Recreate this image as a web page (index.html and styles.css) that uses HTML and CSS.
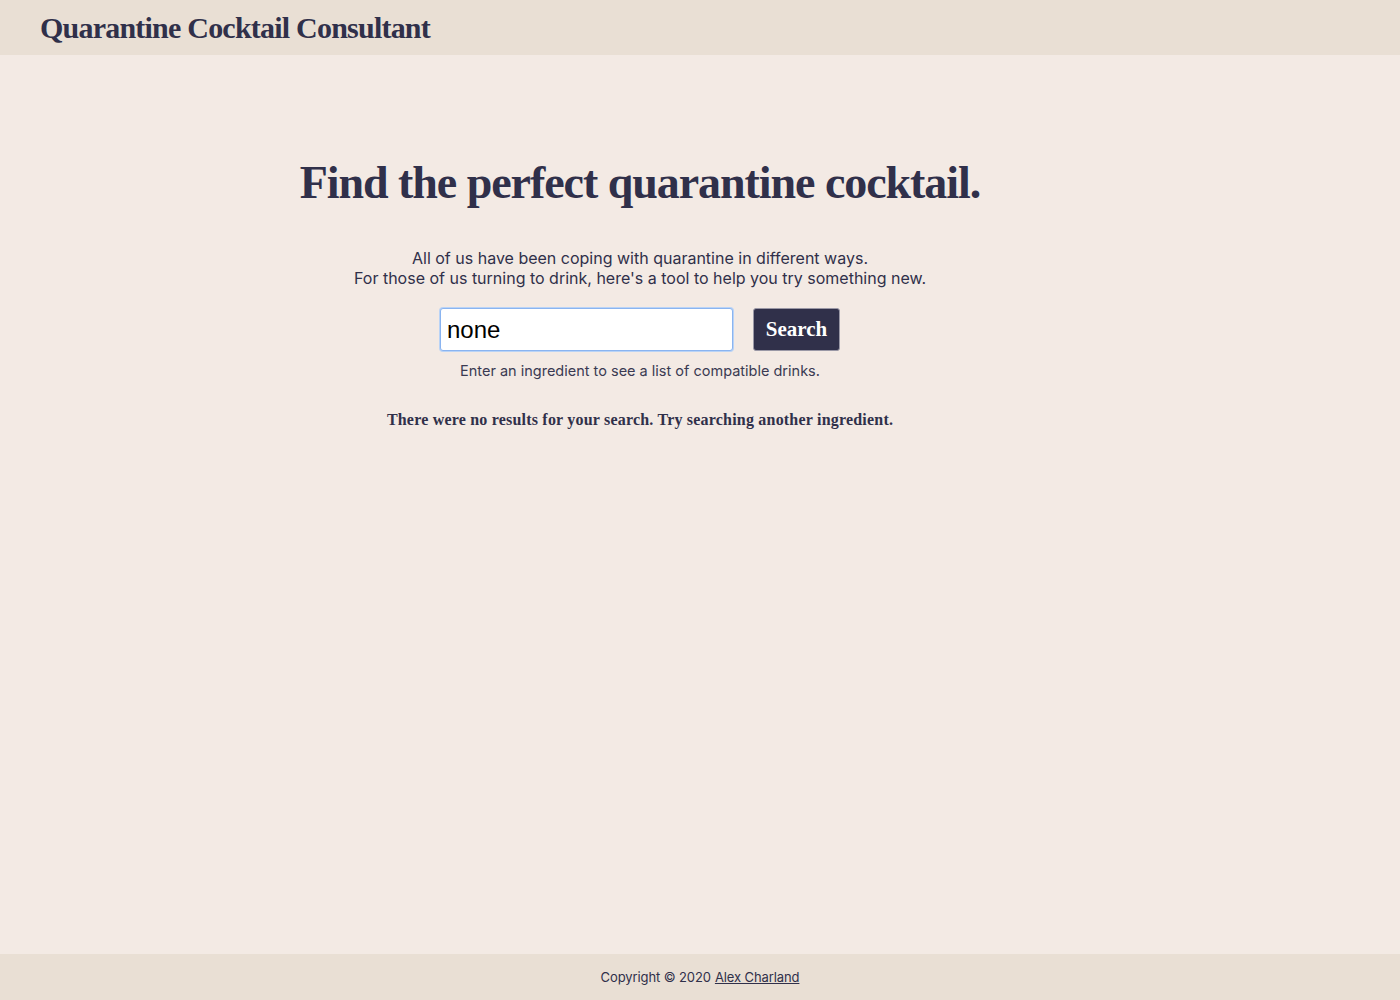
FILE: index.html
```html
<!DOCTYPE html>
<html>
<head>
<meta charset="utf-8">
<title>Quarantine Cocktail Consultant</title>
<link rel="stylesheet" href="styles.css">
</head>
<body>
<div class="page">
  <header class="topbar">
    <h1 class="brand">Quarantine Cocktail Consultant</h1>
  </header>
  <main class="main">
    <h2 class="headline">Find the perfect quarantine cocktail.</h2>
    <p class="intro">All of us have been coping with quarantine in different ways.<br>For those of us turning to drink, here's a tool to help you try something new.</p>
    <form class="search">
      <input class="search-input" type="text" value="none">
      <button class="search-btn" type="button">Search</button>
    </form>
    <p class="hint">Enter an ingredient to see a list of compatible drinks.</p>
    <p class="noresults">There were no results for your search. Try searching another ingredient.</p>
  </main>
  <footer class="footer">Copyright © 2020 <a href="#" class="footer-link">Alex Charland</a></footer>
</div>
</body>
</html>
```

FILE: styles.css
```css
* { box-sizing: border-box; }
html, body { margin: 0; padding: 0; }
body {
  background: #f3eae4;
  color: #30304a;
  font-family: Inter, "Noto Sans", sans-serif;
}
.page {
  min-height: 1000px;
  display: flex;
  flex-direction: column;
}
.topbar {
  background: #e9dfd4;
  height: 55px;
  display: flex;
  align-items: center;
  padding-left: 40px;
}
.brand {
  margin: 0;
  font-family: "Liberation Serif", "DejaVu Serif", serif;
  font-weight: 700;
  font-size: 30px;
  letter-spacing: -0.78px;
  color: #30304a;
}
.main {
  flex: 1;
  width: 1280px;
  text-align: center;
  padding-top: 100px;
}
.headline {
  margin: 0;
  font-family: "Liberation Serif", "DejaVu Serif", serif;
  font-weight: 700;
  font-size: 46px;
  line-height: 56px;
  letter-spacing: -1.05px;
  color: #30304a;
}
.intro {
  margin: 37px 0 0;
  font-size: 16px;
  line-height: 20px;
  color: #30304a;
}
.search {
  margin-top: 20px;
  display: flex;
  justify-content: center;
  gap: 20px;
}
.search-input {
  width: 293px;
  height: 43px;
  border: 1px solid #8ab4f0;
  border-radius: 3px;
  box-shadow: 0 0 0 1px #b9d3f6;
  background: #fff;
  font-family: "Liberation Sans", Arial, sans-serif;
  font-size: 24px;
  color: #000;
  padding: 0 6px;
  outline: none;
}
.search-btn {
  width: 87px;
  height: 43px;
  background: #30304a;
  color: #fff;
  border: 1px solid #9a98a6;
  border-radius: 3px;
  font-family: "Liberation Serif", "DejaVu Serif", serif;
  font-weight: 700;
  font-size: 21px;
  padding: 0;
}
.hint {
  margin: 11px 0 0;
  font-size: 14.5px;
  line-height: 18px;
  color: #3a3a52;
}
.noresults {
  margin: 31px 0 0;
  font-family: "Liberation Serif", "DejaVu Serif", serif;
  font-weight: 700;
  font-size: 16px;
  letter-spacing: 0.2px;
  color: #30304a;
}
.footer {
  background: #e9dfd4;
  height: 46px;
  display: flex;
  align-items: center;
  justify-content: center;
  font-size: 13px;
  letter-spacing: -0.1px;
  color: #30304a;
}
.footer-link {
  color: #30304a;
  margin-left: 4px;
}
```
